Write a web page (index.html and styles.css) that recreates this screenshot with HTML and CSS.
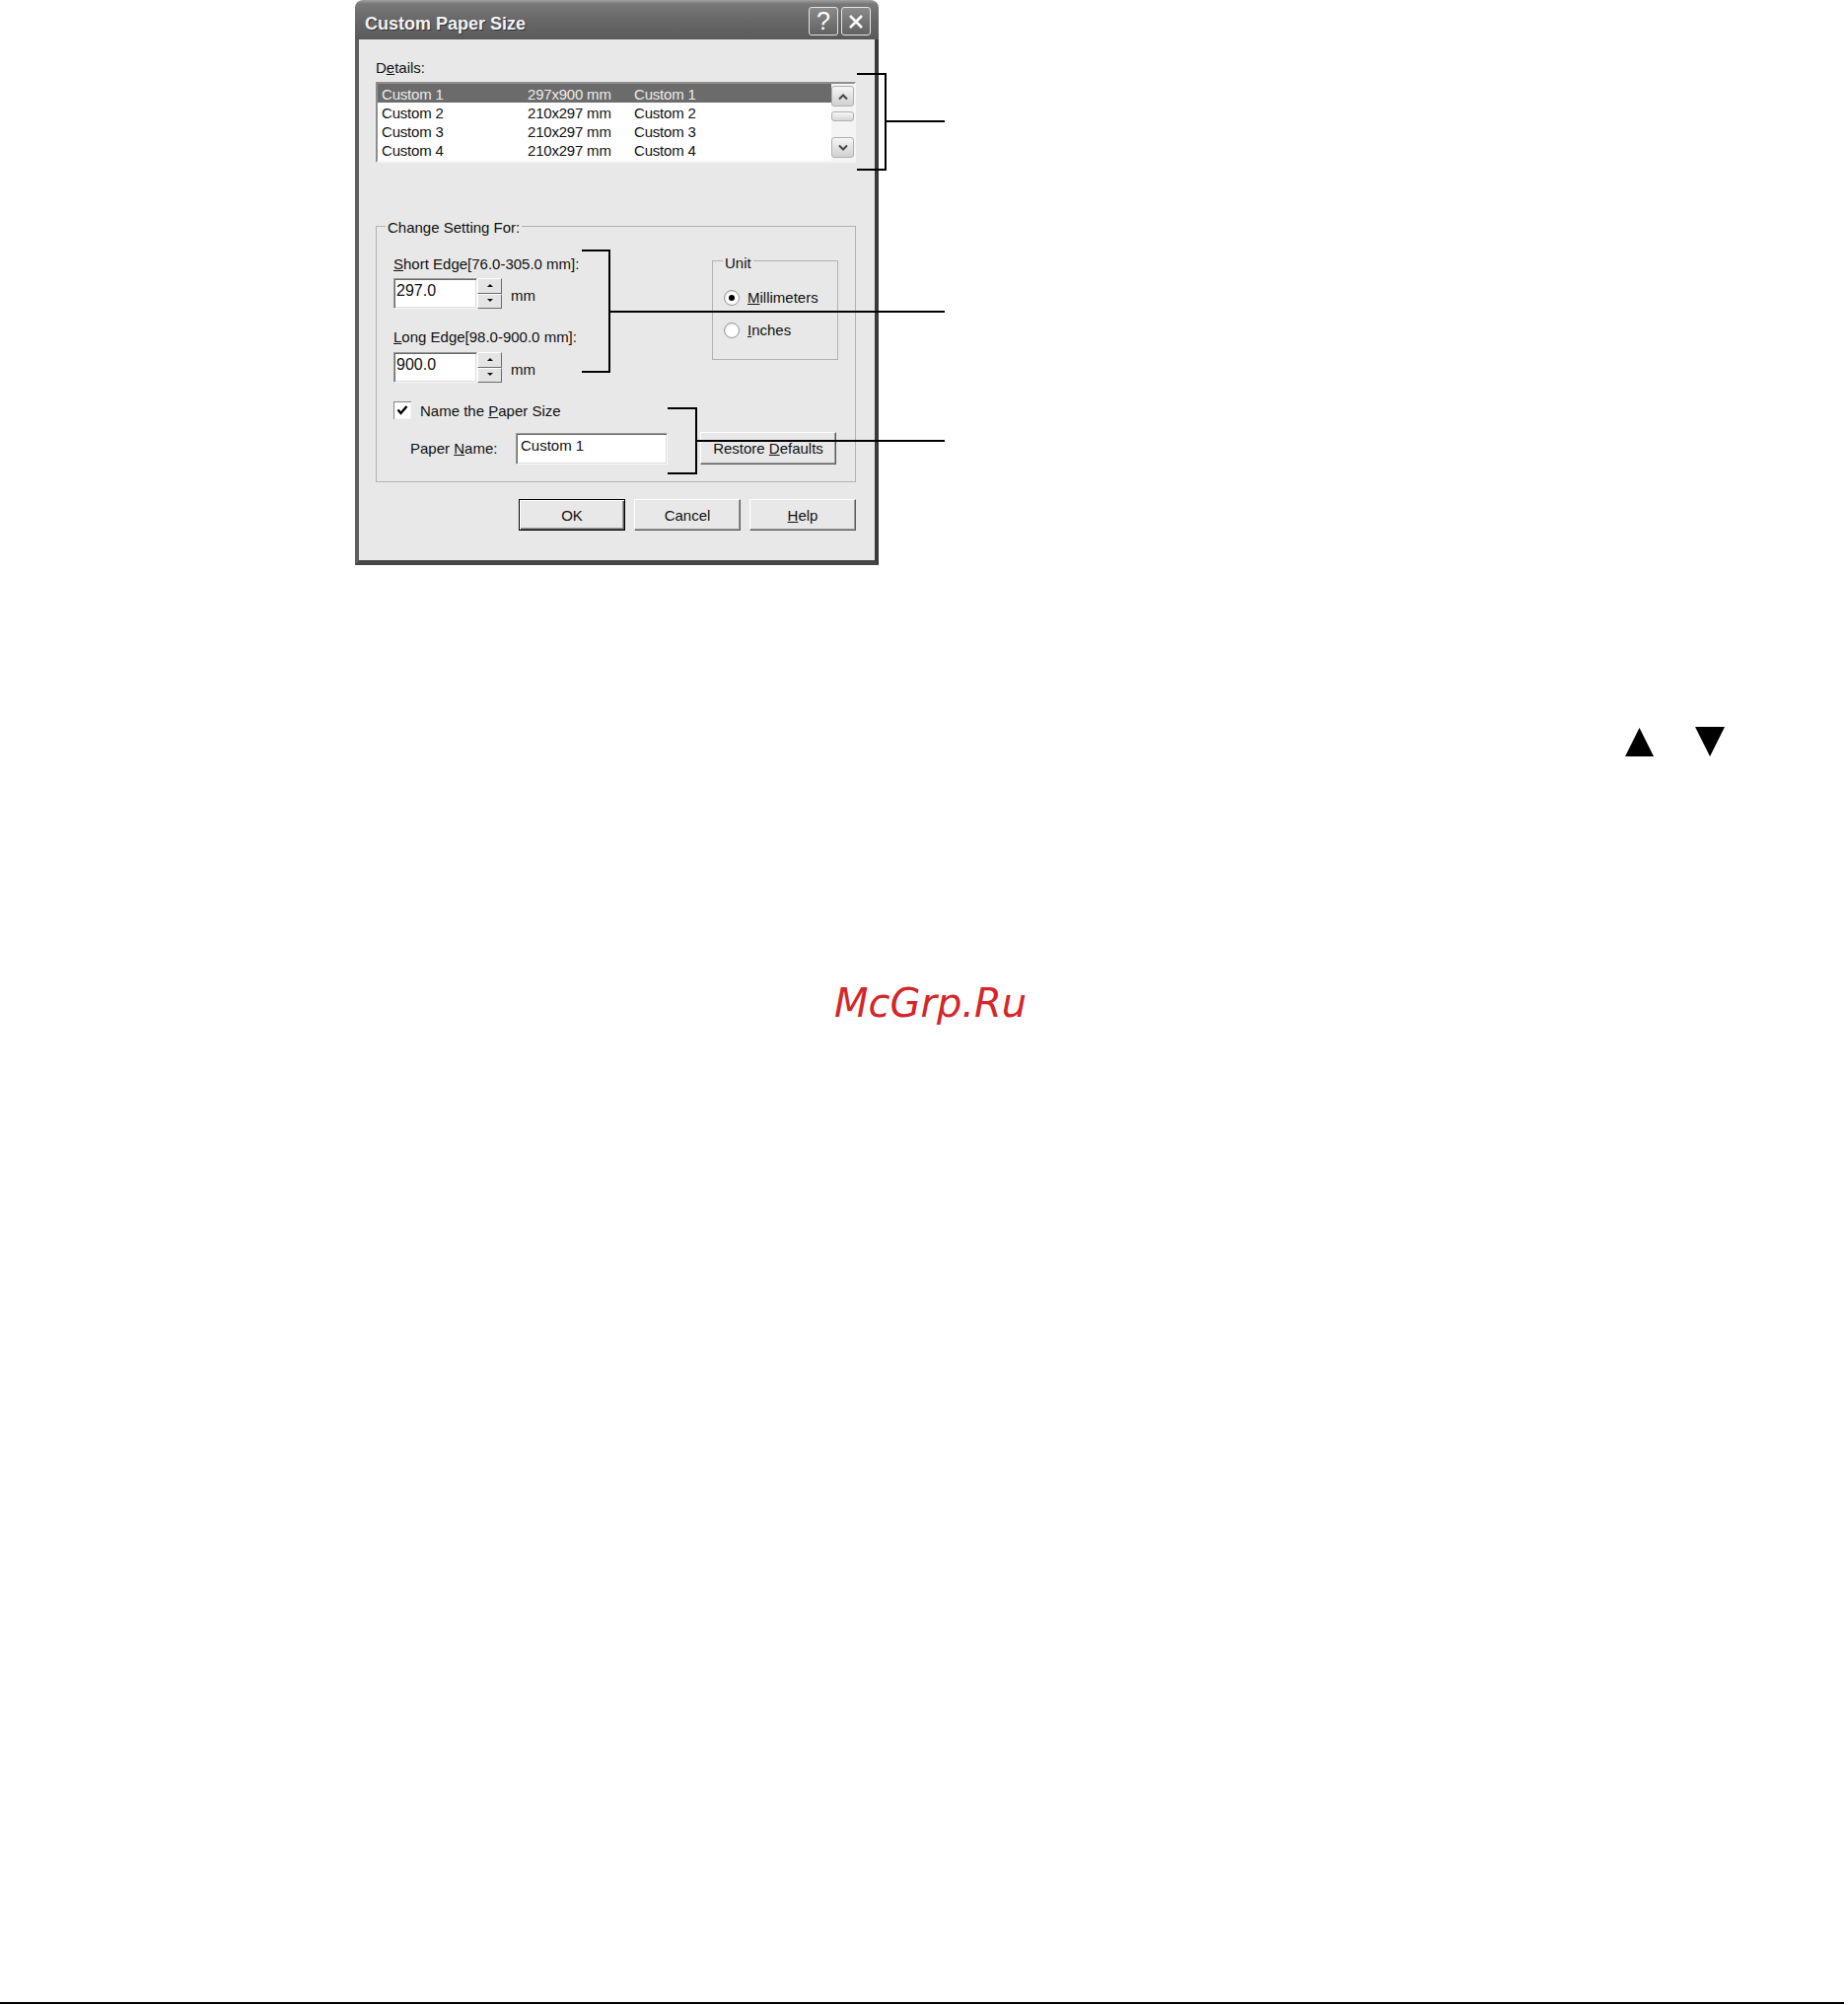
FILE: index.html
```html
<!DOCTYPE html>
<html lang="en">
<head>
<meta charset="UTF-8">
<meta name="viewport" content="width=device-width, initial-scale=1.0">
<title>Custom Paper Size</title>
<link rel="stylesheet" href="styles.css">
</head>
<body>
<div class="page">
    <div class="figure">
        <div class="dialog-wrap">
            <div class="dialog">
                <div class="titlebar">
                    <span class="title">Custom Paper Size</span>
                    <div class="title-buttons">
                        <span class="tbtn">?</span>
                        <span class="tbtn">
                            <svg width="16" height="16" viewBox="0 0 16 16"><path d="M2 2 L14 14 M14 2 L2 14" stroke="#fff" stroke-width="2.6" fill="none"/></svg>
                        </span>
                    </div>
                </div>
                <div class="dialog-body">
                    <div class="field-label">D<u>e</u>tails:</div>
                    <div class="listbox">
                        <div class="rows">
                            <div class="row selected"><span>Custom 1</span><span>297x900 mm</span><span>Custom 1</span></div>
                            <div class="row"><span>Custom 2</span><span>210x297 mm</span><span>Custom 2</span></div>
                            <div class="row"><span>Custom 3</span><span>210x297 mm</span><span>Custom 3</span></div>
                            <div class="row"><span>Custom 4</span><span>210x297 mm</span><span>Custom 4</span></div>
                        </div>
                        <div class="scrollbar">
                            <div class="sb-btn">
                                <svg width="10" height="8" viewBox="0 0 10 8"><polyline points="1,6.5 5,2.5 9,6.5" stroke="#444" stroke-width="2" fill="none"/></svg>
                            </div>
                            <div class="sb-thumb"></div>
                            <div class="sb-btn sb-down">
                                <svg width="10" height="8" viewBox="0 0 10 8"><polyline points="1,1.5 5,5.5 9,1.5" stroke="#444" stroke-width="2" fill="none"/></svg>
                            </div>
                        </div>
                    </div>

                    <fieldset class="group settings">
                        <legend>Change Setting For:</legend>
                        <div class="settings-top">
                            <div class="edges">
                                <div class="field-label"><u>S</u>hort Edge[76.0-305.0 mm]:</div>
                                <div class="spin-row">
                                    <div class="textbox spin-input">297.0</div>
                                    <div class="spin"><span class="spin-up"></span><span class="spin-down"></span></div>
                                    <span class="unit-text">mm</span>
                                </div>
                                <div class="field-label long-label"><u>L</u>ong Edge[98.0-900.0 mm]:</div>
                                <div class="spin-row second">
                                    <div class="textbox spin-input">900.0</div>
                                    <div class="spin"><span class="spin-up"></span><span class="spin-down"></span></div>
                                    <span class="unit-text">mm</span>
                                </div>
                            </div>
                            <fieldset class="group unit-box">
                                <legend>Unit</legend>
                                <div class="radio-row"><span class="radio checked"></span><span><u>M</u>illimeters</span></div>
                                <div class="radio-row"><span class="radio"></span><span><u>I</u>nches</span></div>
                            </fieldset>
                        </div>
                        <div class="check-row">
                            <svg class="checkbox" width="18" height="18" viewBox="0 0 18 18">
                                <rect x="0" y="0" width="18" height="18" fill="#8a8a8a"/>
                                <rect x="1" y="1" width="17" height="17" fill="#f4f4f4"/>
                                <rect x="2" y="2" width="15" height="15" fill="#fff"/>
                                <polyline points="4.5,8.5 7.5,12 13.5,5" stroke="#000" stroke-width="2.4" fill="none"/>
                            </svg>
                            <span>Name the <u>P</u>aper Size</span>
                        </div>
                        <div class="name-row">
                            <span class="name-label">Paper <u>N</u>ame:</span>
                            <div class="textbox name-input">Custom 1</div>
                            <div class="btn restore-btn"><span>Restore <u>D</u>efaults</span></div>
                        </div>
                    </fieldset>

                    <div class="buttons">
                        <div class="btn default-btn"><span>OK</span></div>
                        <div class="btn"><span>Cancel</span></div>
                        <div class="btn"><span><u>H</u>elp</span></div>
                    </div>
                </div>
            </div>

            <!-- callout brackets and leader lines -->
            <div class="bracket b-list"></div>
            <div class="leader l-list"></div>
            <div class="bracket b-edges"></div>
            <div class="leader l-edges"></div>
            <div class="bracket b-name"></div>
            <div class="leader l-name"></div>
        </div>
    </div>

    <div class="arrows">
        <svg width="30" height="30" viewBox="0 0 30 30"><polygon points="0,30 14.5,1 29,30" fill="#000"/></svg>
        <svg width="31" height="31" viewBox="0 0 31 31"><polygon points="0,0 30,0 15,30" fill="#000"/></svg>
    </div>

    <div class="watermark">McGrp.Ru</div>

    <div class="footer-rule"></div>
</div>
</body>
</html>
```

FILE: styles.css
```css
body {
    margin: 0;
    background: #fff;
    font-family: "Liberation Sans", Arial, sans-serif;
}

.page {
    min-height: 2033px;
    display: flex;
    flex-direction: column;
}

.figure {
    padding-left: 360px;
}

.dialog-wrap {
    position: relative;
    width: 531px;
}

.dialog {
    width: 531px;
    font-size: 15px;
    line-height: 17px;
    color: #111;
}

/* title bar */
.titlebar {
    height: 40px;
    box-sizing: border-box;
    border-radius: 8px 8px 0 0;
    background: linear-gradient(#a0a0a0 0, #787878 4px, #686868 50%, #5a5a5a 100%);
    display: flex;
    justify-content: space-between;
    align-items: flex-start;
    padding: 0 8px 0 10px;
}

.title {
    padding-top: 14px;
    font-size: 18px;
    line-height: 20px;
    font-weight: bold;
    color: #f2f2f2;
    text-shadow: 1px 1px 0 #333;
}

.title-buttons {
    display: flex;
    gap: 3px;
    padding-top: 7px;
}

.tbtn {
    width: 30px;
    height: 29px;
    box-sizing: border-box;
    border: 1px solid #e4e4e4;
    border-radius: 3px;
    background: linear-gradient(#8a8a8a, #626262);
    color: #fff;
    font-size: 25px;
    line-height: 27px;
    text-align: center;
    display: flex;
    align-items: center;
    justify-content: center;
}

/* dialog body */
.dialog-body {
    background: #e8e8e8;
    border-left: 4px solid #5e5e5e;
    border-right: 4px solid #3a3a3a;
    border-bottom: 5px solid #464646;
    padding: 20px 19px 30px 17px;
}

.field-label {
    line-height: 17px;
}

.textbox {
    box-sizing: border-box;
    background: #fff;
    border: 1px solid;
    border-color: #9a9a9a #f8f8f8 #f8f8f8 #9a9a9a;
    box-shadow: inset 1px 1px 0 #6a6a6a, inset -1px -1px 0 #dcdcdc;
}

/* details list */
.listbox {
    margin-top: 6px;
    height: 82px;
    box-sizing: border-box;
    display: flex;
    background: #fff;
    border: 2px solid;
    border-color: #8e8e8e #f4f4f4 #f4f4f4 #8e8e8e;
}

.rows {
    flex: 1;
}

.row {
    display: grid;
    grid-template-columns: 148px 108px 1fr;
    height: 19px;
    box-sizing: border-box;
    padding: 3px 0 0 4px;
    line-height: 16px;
    letter-spacing: -0.2px;
    white-space: nowrap;
}

.row.selected {
    background: #6b6b6b;
    color: #ececec;
}

.scrollbar {
    width: 23px;
    box-sizing: border-box;
    display: flex;
    flex-direction: column;
    padding: 2px 0 3px;
    background: #f4f4f4;
}

.sb-btn {
    height: 21px;
    box-sizing: border-box;
    border: 1px solid #b0b0b0;
    border-radius: 3px;
    background: linear-gradient(#f6f6f6, #d0d0d0);
    display: flex;
    align-items: center;
    justify-content: center;
}

.sb-thumb {
    margin-top: 5px;
    height: 10px;
    box-sizing: border-box;
    border: 1px solid #b0b0b0;
    border-radius: 3px;
    background: linear-gradient(#f6f6f6, #d6d6d6);
}

.sb-down {
    margin-top: auto;
}

/* group boxes */
.group {
    margin: 0;
    min-width: 0;
    border: 1px solid #b2b2b2;
}

.group legend {
    padding: 4px 2px 0;
    line-height: 17px;
}

.settings {
    margin-top: 55px;
    padding: 15px 17px 17px 17px;
}

.settings > legend {
    margin-left: -8px;
    padding-top: 2px;
}

.settings-top {
    display: flex;
    justify-content: space-between;
    align-items: flex-start;
}

.edges {
    padding-top: 5px;
}

.spin-row {
    display: flex;
    align-items: center;
    margin-top: 6px;
}

.spin-row.second {
    margin-top: 7px;
}

.long-label {
    margin-top: 20px;
}

.spin-input {
    width: 85px;
    height: 31px;
    padding: 3px 0 0 2px;
    font-size: 16px;
}

.spin {
    width: 25px;
    height: 31px;
    display: flex;
    flex-direction: column;
}

.spin span {
    flex: 1;
    position: relative;
    background: #e4e4e4;
    border: 1px solid;
    border-color: #fff #6a6a6a #6a6a6a #fff;
}

.spin span::after {
    content: "";
    position: absolute;
    left: 50%;
    top: 50%;
    margin: -2px 0 0 -3px;
    border-left: 3px solid transparent;
    border-right: 3px solid transparent;
}

.spin-up::after {
    border-bottom: 3px solid #111;
}

.spin-down::after {
    border-top: 3px solid #111;
}

.unit-text {
    margin-left: 9px;
    padding-top: 3px;
}

.unit-box {
    width: 128px;
    box-sizing: border-box;
    padding: 18px 0 21px 11px;
}

.unit-box legend {
    margin-left: -1px;
}

.radio-row {
    display: flex;
    align-items: center;
    gap: 8px;
    line-height: 17px;
}

.radio-row + .radio-row {
    margin-top: 16px;
}

.radio {
    width: 16px;
    height: 16px;
    box-sizing: border-box;
    border-radius: 50%;
    border: 1px solid #969696;
    background: radial-gradient(circle at 60% 60%, #fff 45%, #d8d8d8);
    position: relative;
}

.radio.checked::after {
    content: "";
    position: absolute;
    left: 4px;
    top: 4px;
    width: 6px;
    height: 6px;
    border-radius: 50%;
    background: #000;
}

.check-row {
    display: flex;
    align-items: center;
    gap: 9px;
    margin-top: 19px;
    height: 18px;
}

.checkbox {
    display: block;
}

.name-row {
    display: flex;
    align-items: center;
    margin-top: 13px;
}

.name-label {
    margin-left: 17px;
    width: 107px;
}

.name-input {
    width: 154px;
    height: 32px;
    padding: 3px 0 0 4px;
}

/* push buttons */
.btn {
    box-sizing: border-box;
    height: 32px;
    background: #e8e8e8;
    border: 1px solid;
    border-color: #fff #5a5a5a #5a5a5a #fff;
    box-shadow: inset -1px -1px 0 #9c9c9c;
    display: flex;
    align-items: center;
    justify-content: center;
}

.restore-btn {
    margin-left: 33px;
    width: 138px;
    height: 33px;
}

.buttons {
    display: flex;
    justify-content: flex-end;
    gap: 9px;
    margin-top: 17px;
}

.buttons .btn {
    width: 108px;
}

.default-btn {
    border: 1px solid #000;
    box-shadow: inset 1px 1px 0 #fff, inset -1px -1px 0 #5a5a5a, inset -2px -2px 0 #9c9c9c;
}

/* callouts */
.bracket {
    position: absolute;
    box-sizing: border-box;
    border: 2px solid #000;
    border-left: none;
}

.leader {
    position: absolute;
    height: 2px;
    background: #000;
}

.b-list {
    left: 509px;
    top: 74px;
    width: 30px;
    height: 99px;
}

.l-list {
    left: 539px;
    top: 122px;
    width: 59px;
}

.b-edges {
    left: 230px;
    top: 253px;
    width: 29px;
    height: 125px;
}

.l-edges {
    left: 259px;
    top: 315px;
    width: 339px;
}

.b-name {
    left: 317px;
    top: 413px;
    width: 30px;
    height: 68px;
}

.l-name {
    left: 347px;
    top: 446px;
    width: 251px;
}

.arrows {
    display: flex;
    gap: 41px;
    margin-top: 164px;
    padding-left: 1648px;
}

.arrows svg {
    display: block;
}

.watermark {
    margin-top: 226px;
    padding-left: 846px;
    font-family: "DejaVu Sans", sans-serif;
    font-style: italic;
    font-size: 40px;
    line-height: 46px;
    color: #d5262a;
}

.footer-rule {
    margin-top: auto;
    margin-bottom: 1px;
    width: 1870px;
    height: 2px;
    background: #000;
}
```
